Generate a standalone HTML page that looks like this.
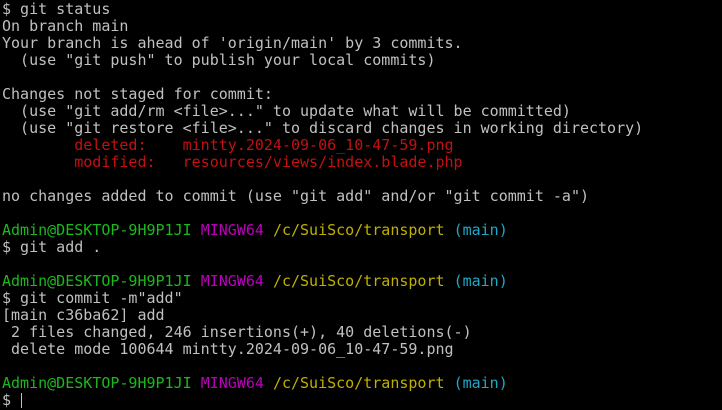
<!DOCTYPE html>
<html><head><meta charset="utf-8"><style>
html,body{margin:0;padding:0;background:#000;width:722px;height:410px;overflow:hidden}
pre{margin:0;padding:1px 0 0 2px;font-family:"DejaVu Sans Mono","Liberation Mono",monospace;font-size:15px;line-height:17px;color:#c0c0c0;white-space:pre}
.r{color:#c41010}.g{color:#1cb91c}.m{color:#bb00bb}.y{color:#c0b000}.c{color:#20a8c8}
.cur{display:inline-block;width:1px;height:15px;background:#c0c0c0;vertical-align:-3px;margin-left:1px}
</style></head><body><pre>$ git status
On branch main
Your branch is ahead of 'origin/main' by 3 commits.
  (use "git push" to publish your local commits)

Changes not staged for commit:
  (use "git add/rm &lt;file&gt;..." to update what will be committed)
  (use "git restore &lt;file&gt;..." to discard changes in working directory)
        <span class="r">deleted:    mintty.2024-09-06_10-47-59.png</span>
        <span class="r">modified:   resources/views/index.blade.php</span>

no changes added to commit (use "git add" and/or "git commit -a")

<span class="g">Admin@DESKTOP-9H9P1JI</span> <span class="m">MINGW64</span> <span class="y">/c/SuiSco/transport</span> <span class="c">(main)</span>
$ git add .

<span class="g">Admin@DESKTOP-9H9P1JI</span> <span class="m">MINGW64</span> <span class="y">/c/SuiSco/transport</span> <span class="c">(main)</span>
$ git commit -m"add"
[main c36ba62] add
 2 files changed, 246 insertions(+), 40 deletions(-)
 delete mode 100644 mintty.2024-09-06_10-47-59.png

<span class="g">Admin@DESKTOP-9H9P1JI</span> <span class="m">MINGW64</span> <span class="y">/c/SuiSco/transport</span> <span class="c">(main)</span>
$ <span class="cur"></span></pre></body></html>
